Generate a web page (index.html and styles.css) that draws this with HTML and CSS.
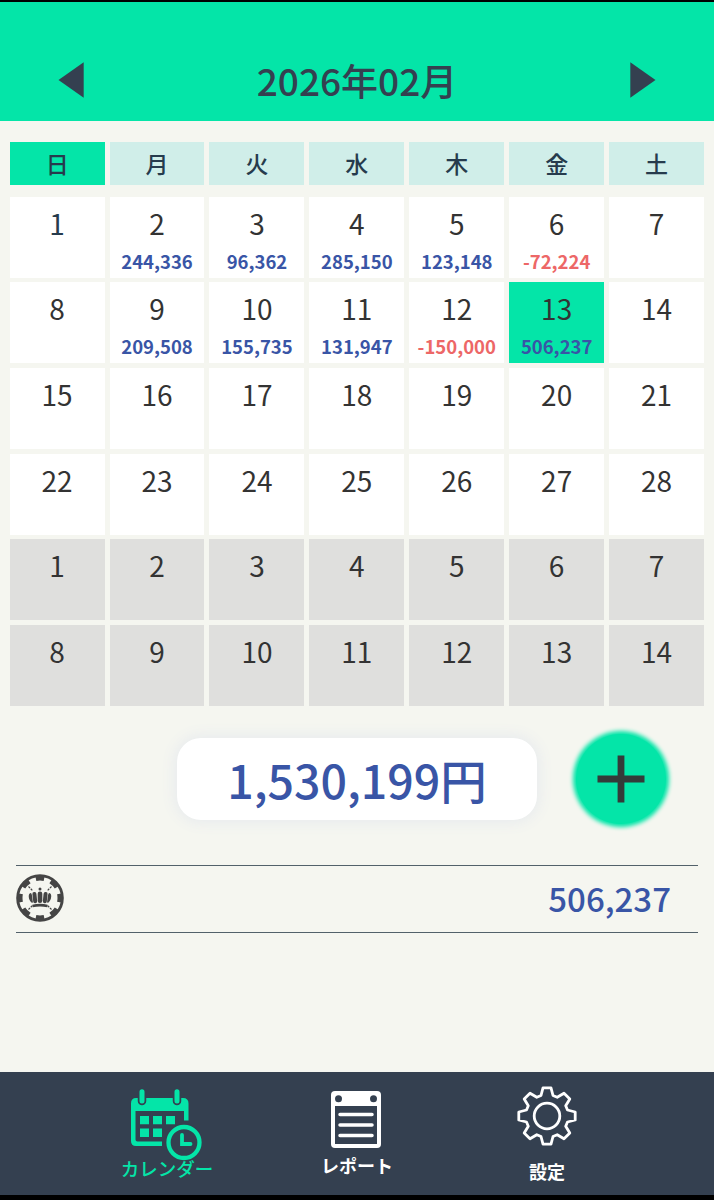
FILE: index.html
```html
<!DOCTYPE html>
<html lang="ja">
<head>
  <meta charset="UTF-8" />
  <meta name="viewport" content="width=device-width, initial-scale=1.0" />
  <title>カレンダー</title>
  <link rel="stylesheet" href="styles.css">
</head>
<body>
  <header>
    <button class="arrow" aria-label="前の月"><svg width="27" height="36" viewBox="0 0 27 36"><path d="M26.700 .3 V35.700 L1.500 18 Z" /></svg></button>
    <h1>2026年02月</h1>
    <button class="arrow" aria-label="次の月"><svg width="27" height="36" viewBox="0 0 27 36"><path d="M.3 .3 V35.700 L25.500 18 Z" /></svg></button>
  </header>

  <main>
    <div class="week">
      <div class="sunday">日</div><div>月</div><div>火</div><div>水</div><div>木</div><div>金</div><div>土</div>
    </div>

    <div class="days">
      <div class="day first">1</div>
      <div class="day">2<span class="plus">244,336</span></div>
      <div class="day">3<span class="plus">96,362</span></div>
      <div class="day">4<span class="plus">285,150</span></div>
      <div class="day">5<span class="plus">123,148</span></div>
      <div class="day">6<span class="minus">-72,224</span></div>
      <div class="day">7</div>

      <div class="day">8</div>
      <div class="day">9<span class="plus">209,508</span></div>
      <div class="day">10<span class="plus">155,735</span></div>
      <div class="day">11<span class="plus">131,947</span></div>
      <div class="day">12<span class="minus">-150,000</span></div>
      <div class="day selected">13<span class="plus">506,237</span></div>
      <div class="day">14</div>

      <div class="day">15</div>
      <div class="day">16</div>
      <div class="day">17</div>
      <div class="day">18</div>
      <div class="day">19</div>
      <div class="day">20</div>
      <div class="day">21</div>

      <div class="day">22</div>
      <div class="day">23</div>
      <div class="day">24</div>
      <div class="day">25</div>
      <div class="day">26</div>
      <div class="day">27</div>
      <div class="day">28</div>

      <div class="day other">1</div>
      <div class="day other">2</div>
      <div class="day other">3</div>
      <div class="day other">4</div>
      <div class="day other">5</div>
      <div class="day other">6</div>
      <div class="day other">7</div>

      <div class="day other">8</div>
      <div class="day other">9</div>
      <div class="day other">10</div>
      <div class="day other">11</div>
      <div class="day other">12</div>
      <div class="day other">13</div>
      <div class="day other">14</div>
    </div>

    <div class="summary">
      <div class="total">1,530,199円</div>
      <button class="add" aria-label="追加">
        <svg width="48" height="48" viewBox="0 0 48 48"><path d="M24 .5 V47.5 M.5 24 H47.5" stroke="#333b39" stroke-width="6.8" /></svg>
      </button>
    </div>

    <div class="record">
      <svg class="chip" width="48" height="48" viewBox="0 0 48 48" fill="none" stroke="#454545">
        <circle cx="24" cy="24" r="22.4" stroke-width="2.8" />
        <circle cx="24" cy="24" r="20.2" stroke-width="5.4" pathLength="160" stroke-dasharray="11 9" stroke-dashoffset="5.5" />
        <path d="M12.5 12.5 L17 17 M35.5 12.5 L31 17 M12.5 35.5 L17 31 M35.5 35.5 L31 31" stroke-width="1.2" stroke-dasharray="2.2 1" />
        <g fill="#454545" stroke="none">
          <circle cx="24" cy="15" r="1.5" />
          <rect x="21.7" y="17.5" width="4.6" height="11.5" rx="2.2" />
          <rect x="16.8" y="18" width="4" height="11.2" rx="1.9" transform="rotate(-6 18.8 23.6)" />
          <rect x="27.2" y="18" width="4" height="11.2" rx="1.9" transform="rotate(6 29.2 23.600)" />
          <path d="M15.800 28.800 C12 25.500 11.900 19.500 14.600 19 C16.300 19 16.300 25 17 28.400 Z" />
          <path d="M32.200 28.800 C36 25.500 36.100 19.500 33.400 19 C31.700 19 31.700 25 31 28.400 Z" />
          <path d="M16.300 30.700 Q24 28.600 31.700 30.700 L31.300 33.300 Q24 31.600 16.700 33.300 Z" />
        </g>
      </svg>
      <span>506,237</span>
    </div>
  </main>

  <nav>
    <a class="tab active">
      <svg class="icon-calendar" width="72" height="72" viewBox="0 0 72 72">
        <path d="M6 9 H53 Q58.500 9 58.500 14.500 V31.500 H54 V22 H5.500 V50.500 Q5.500 52.500 7.500 52.500 H32 V57 H6 Q1 57 1 52 V14.500 Q1 9 6 9 Z" fill="currentColor" />
        <path d="M12 3.500 V12 M47 3.500 V12" stroke="#344050" stroke-width="8.500" stroke-linecap="round" />
        <path d="M12 2.700 V12 M47 2.700 V12" stroke="currentColor" stroke-width="5" stroke-linecap="round" />
        <path d="M10 27 H19 V35.300 H10 Z M23 27 H32 V35.300 H23 Z M36 27 H45 V35.300 H36 Z M10 39.500 H19 V48 H10 Z M23 39.500 H32 V48 H23 Z" fill="currentColor" />
        <circle cx="54" cy="53.500" r="19" fill="#344050" />
        <circle cx="54" cy="53.500" r="15.500" fill="none" stroke="currentColor" stroke-width="4.300" />
        <path d="M52 46 V55 H60.500" fill="none" stroke="currentColor" stroke-width="3.800" stroke-linecap="round" />
      </svg>
      <span>カレンダー</span>
    </a>
    <a class="tab">
      <svg class="icon-report" width="50" height="57" viewBox="0 0 50 57">
        <path d="M4 0 H46 Q50 0 50 4 V53 Q50 57 46 57 H4 Q0 57 0 53 V4 Q0 0 4 0 Z" fill="#fff" />
        <path d="M4 15 H46 V53 H4 Z" fill="#344050" />
        <circle cx="7.500" cy="7.700" r="3.500" fill="#344050" />
        <circle cx="42.500" cy="7.700" r="3.500" fill="#344050" />
        <path d="M9 23.500 H41 M9 34 H41 M9 44.500 H41" stroke="#fff" stroke-width="3.500" stroke-linecap="round" />
      </svg>
      <span>レポート</span>
    </a>
    <a class="tab">
      <svg class="icon-gear" width="60" height="60" viewBox="-30 -30 60 60" fill="none" stroke="#fff" stroke-width="2.800" stroke-linejoin="round">
        <path d="M-6 -20.500 L-4 -28.200 H4 L6 -20.500 L10.200 -18.700 L17 -22.800 L22.800 -17 L18.700 -10.200 L20.500 -6 L28.200 -4 V4 L20.500 6 L18.700 10.200 L22.800 17 L17 22.800 L10.200 18.700 L6 20.500 L4 28.200 H-4 L-6 20.500 L-10.200 18.700 L-17 22.800 L-22.800 17 L-18.700 10.200 L-20.500 6 L-28.200 4 V-4 L-20.500 -6 L-18.700 -10.200 L-22.800 -17 L-17 -22.800 L-10.200 -18.700 Z" />
        <circle r="12.800" />
      </svg>
      <span>設定</span>
    </a>
  </nav>
</body>
</html>
```
FILE: styles.css
```css
* { box-sizing: border-box; }
body {
  margin: 0;
  height: 1200px;
  display: flex;
  flex-direction: column;
  border-top: 2px solid #000;
  border-bottom: 5px solid #000;
  background: #f5f6f0;
  color: #333;
  font-family: "Noto Sans CJK JP", sans-serif;
  overflow: hidden;
}
button { background: none; border: none; padding: 0; display: flex; }

header {
  height: 119px;
  padding: 36px 57px 0;
  display: flex;
  justify-content: space-between;
  align-items: center;
  background: #04e5a8;
}
h1 { margin: 0; font-size: 37px; line-height: 54px; font-weight: 500; color: #344050; }
.arrow { fill: #344050; }

main { flex: 1; padding-top: 21px; }
.week, .days {
  display: grid;
  grid-template-columns: repeat(7, 1fr);
  column-gap: 5px;
  padding: 0 10px 0 9.7px;
}
.week div {
  height: 43px;
  background: #d0eee9;
  color: #263b4d;
  font-size: 23px;
  line-height: 43px;
  font-weight: 500;
  text-align: center;
}
.week .sunday { background: #04e5a8; }
.days { margin-top: 11.5px; row-gap: 4.7px; }
.day {
  height: 81px;
  padding-top: 6px;
  background: #fff;
  font-size: 28px;
  line-height: 40px;
  text-align: center;
}
.day span { display: block; font-size: 18.5px; line-height: 28px; margin-top: 4px; font-weight: 700; }
.first { color: #263b4d; }
.plus { color: #3955a6; }
.minus { color: #ed6767; }
.selected { background: #04e5a8; }
.other { background: #dfdfdd; }

.summary {
  display: flex;
  align-items: center;
  justify-content: flex-end;
  gap: 39px;
  margin-top: 28px;
  padding-right: 48px;
}
.total {
  width: 360px;
  height: 82px;
  border-radius: 24px;
  background: #fff;
  box-shadow: 0 0 14px 3px #e8ebee;
  color: #3955a6;
  font-size: 46.5px;
  line-height: 82px;
  font-weight: 500;
  text-align: center;
}
.add {
  width: 90px;
  height: 90px;
  border-radius: 50%;
  background: #04e5a8;
  box-shadow: 0 0 4px 3px #04e5a8;
  align-items: center;
  justify-content: center;
}

.record {
  height: 68px;
  margin: 41px 16px 0;
  padding: 0 27px 2px 0;
  display: flex;
  align-items: center;
  justify-content: space-between;
  border-top: 1.5px solid #52616a;
  border-bottom: 1.5px solid #52616a;
  color: #3955a6;
  font-size: 33px;
  line-height: 48px;
  font-weight: 500;
}

nav {
  height: 123px;
  display: flex;
  justify-content: center;
  background: #344050;
}
.tab {
  width: 190px;
  display: flex;
  flex-direction: column;
  align-items: center;
  color: #fff;
  font-size: 18px;
  line-height: 24px;
  font-weight: 700;
}
.active { color: #04e5a8; font-size: 18.5px; font-weight: 500; }
.icon-calendar { margin: 17px 2px -5px 0; }
.icon-report { margin: 19px 2px 5px 0; }
.icon-gear { margin: 14px 0 13px; }
```
